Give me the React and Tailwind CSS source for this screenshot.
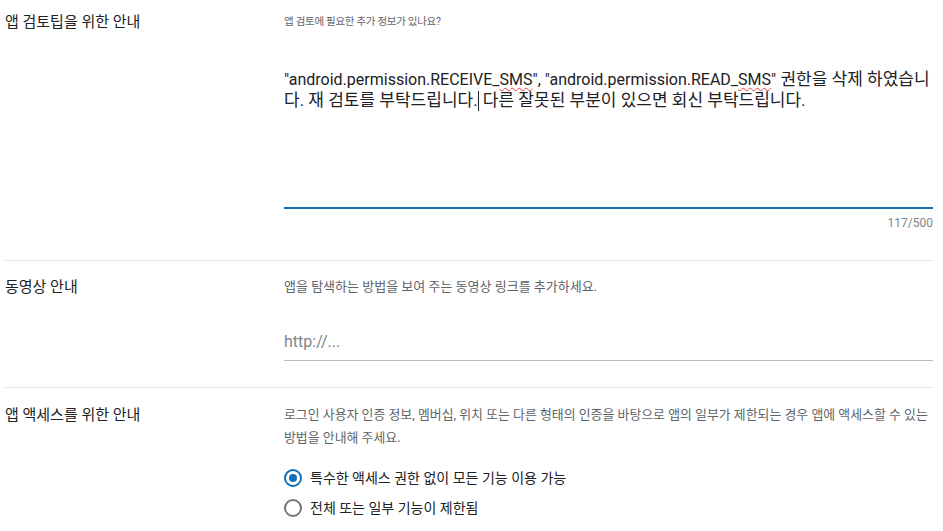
import { useState } from "react";

const font = { fontFamily: 'Roboto, "Noto Sans CJK KR", sans-serif' };

function Section({ label, children, className = "" }) {
  return (
    <div className={"flex border-b border-[#e0e0e0] " + className}>
      <div className="w-[279px] shrink-0 text-[15px] leading-5 text-[#202124]">{label}</div>
      <div className="flex-1">{children}</div>
    </div>
  );
}

function Radio({ checked, label, onClick }) {
  return (
    <button onClick={onClick} className="flex items-center gap-[8px] h-[24px] text-left">
      <span
        className={
          "w-[18px] h-[18px] rounded-full border-2 flex items-center justify-center " +
          (checked ? "border-[#1170b8]" : "border-[#757575]")
        }
      >
        {checked && <span className="w-[8px] h-[8px] rounded-full bg-[#1170b8]" />}
      </span>
      <span className="text-[14px] text-[#202124]">{label}</span>
    </button>
  );
}

export default function App() {
  const [access, setAccess] = useState("all");
  const ko = "text-[17px]";

  return (
    <div className="bg-white min-h-screen pl-[5px] pr-[10px]" style={font}>
      {/* 앱 검토팁 */}
      <Section label="앱 검토팁을 위한 안내" className="pt-[12px] pb-[29px]">
        <div className="text-[10.5px] leading-5 tracking-[-0.3px] text-[#5f6368]">앱 검토에 필요한 추가 정보가 있나요?</div>
        <div className="mt-[37px] h-[140px] border-b-2 border-[#1170b8] text-[16px] leading-[21px] text-[#202124]">
          "android.permission.RECEIVE_
          <span className="underline decoration-wavy decoration-[#e53935] decoration-1 underline-offset-2">SMS</span>
          ", "android.permission.READ_
          <span className="underline decoration-wavy decoration-[#e53935] decoration-1 underline-offset-2">SMS</span>
          "<span className={ko}> 권한을 삭제 하였습니다. 재 검토를 부탁드립니다.</span>
          <span className="inline-block w-px h-[20px] bg-[#202124] align-middle -mt-[2px]" />
          <span className={ko}> 다른 잘못된 부분이 있으면 회신 부탁드립니다.</span>
        </div>
        <div className="mt-[6px] text-right text-[12px] leading-4 text-[#80868b]">117/500</div>
      </Section>

      {/* 동영상 안내 */}
      <Section label="동영상 안내" className="pt-[16px] pb-[26px]">
        <div className="text-[13px] leading-5 text-[#5f6368]">앱을 탐색하는 방법을 보여 주는 동영상 링크를 추가하세요.</div>
        <div className="mt-[33px] border-b border-[#bdbdbd] pb-[6px] text-[16px] leading-[24px] text-[#80868b]">
          http://...
        </div>
      </Section>

      {/* 앱 액세스 */}
      <div className="flex pt-[15px]">
        <div className="w-[279px] shrink-0 text-[15px] leading-5 text-[#202124] mt-[2px]">앱 액세스를 위한 안내</div>
        <div className="flex-1">
          <div className="text-[12.9px] leading-[23px] text-[#5f6368]">
            로그인 사용자 인증 정보, 멤버십, 위치 또는 다른 형태의 인증을 바탕으로 앱의 일부가 제한되는 경우 앱에 액세스할 수 있는 방법을 안내해 주세요.
          </div>
          <div className="mt-[17px] flex flex-col gap-[6px]">
            <Radio checked={access === "all"} label="특수한 액세스 권한 없이 모든 기능 이용 가능" onClick={() => setAccess("all")} />
            <Radio checked={access === "limited"} label="전체 또는 일부 기능이 제한됨" onClick={() => setAccess("limited")} />
          </div>
        </div>
      </div>
    </div>
  );
}
